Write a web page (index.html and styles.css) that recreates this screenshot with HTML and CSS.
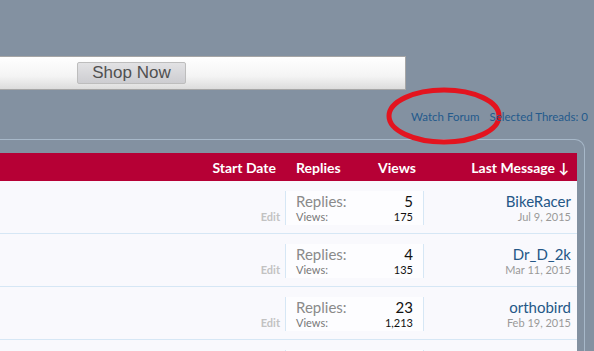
FILE: index.html
```html
<!DOCTYPE html>
<html lang="en">
<head>
    <meta charset="UTF-8" />
    <meta name="viewport" content="width=device-width, initial-scale=1.0"/>
    <title>Forum Threads</title>
    <link rel="stylesheet" href="styles.css">
</head>
<body>

    <div class="banner">
        <span class="shop-btn">Shop Now</span>
    </div>

    <div class="page-nav">
        <a href="#">Watch Forum</a>
        <a href="#">Selected Threads: 0</a>
        <svg class="circle-mark" width="120" height="60" viewBox="0 0 120 60">
            <ellipse cx="59" cy="29" rx="55" ry="26" fill="none" stroke="#e3141f" stroke-width="5"/>
        </svg>
    </div>

    <div class="threads">
        <div class="thread-head">
            <div class="col-main">Start Date</div>
            <div class="col-stats">
                <span>Replies</span>
                <span>Views</span>
            </div>
            <div class="col-last">Last Message &#8595;</div>
        </div>

        <div class="thread">
            <div class="col-main"><span class="edit">Edit</span></div>
            <div class="col-stats">
                <dl><dt>Replies:</dt><dd>5</dd></dl>
                <dl class="small"><dt>Views:</dt><dd>175</dd></dl>
            </div>
            <div class="col-last">
                <a href="#">BikeRacer</a>
                <span class="date">Jul 9, 2015</span>
            </div>
        </div>

        <div class="thread">
            <div class="col-main"><span class="edit">Edit</span></div>
            <div class="col-stats">
                <dl><dt>Replies:</dt><dd>4</dd></dl>
                <dl class="small"><dt>Views:</dt><dd>135</dd></dl>
            </div>
            <div class="col-last">
                <a href="#">Dr_D_2k</a>
                <span class="date">Mar 11, 2015</span>
            </div>
        </div>

        <div class="thread">
            <div class="col-main"><span class="edit">Edit</span></div>
            <div class="col-stats">
                <dl><dt>Replies:</dt><dd>23</dd></dl>
                <dl class="small"><dt>Views:</dt><dd>1,213</dd></dl>
            </div>
            <div class="col-last">
                <a href="#">orthobird</a>
                <span class="date">Feb 19, 2015</span>
            </div>
        </div>

        <div class="thread">
            <div class="col-main"></div>
            <div class="col-stats"></div>
            <div class="col-last"></div>
        </div>
    </div>

</body>
</html>
```

FILE: styles.css
```css
body {
    font-family: Lato, "DejaVu Sans", sans-serif;
    margin: 0;
    padding: 56px 0 0;
    background-color: #8391a1;
    color: #333;
    overflow: hidden;
}
a {
    text-decoration: none;
}
.banner {
    width: 328px;
    height: 32px;
    padding-left: 77px;
    border: 1px solid #a6a6a6;
    border-left: none;
    background: linear-gradient(#ffffff, #f4f4f4 60%, #dcdcdc);
    display: flex;
    align-items: center;
}
.shop-btn {
    font-family: "Liberation Sans", Arial, sans-serif;
    font-size: 17px;
    color: #505050;
    background: linear-gradient(#e2e2e4, #cdcdd1);
    border: 1px solid #bdbdbd;
    border-radius: 2px;
    width: 107px;
    height: 20px;
    line-height: 20px;
    text-align: center;
}
.page-nav {
    position: relative;
    display: flex;
    justify-content: flex-end;
    gap: 10px;
    padding: 20px 6px 0 0;
    height: 29px;
    font-size: 11.5px;
}
.page-nav a {
    color: #245a8c;
    position: relative;
    z-index: 1;
}
.circle-mark {
    position: absolute;
    left: 385px;
    top: -3px;
}
.threads {
    margin-right: 9px;
    border: 1px solid #a7b8c9;
    border-left: none;
    border-radius: 0 10px 0 0;
    padding: 13px 7px 0 0;
}
.thread-head, .thread {
    display: flex;
}
.thread-head {
    background: #b60035;
    color: #fff;
    font-weight: bold;
    font-size: 14px;
    height: 28px;
    align-items: center;
}
.col-main {
    width: 276px;
    padding-right: 10px;
    text-align: right;
}
.col-stats {
    width: 120px;
    padding: 0 8px 0 10px;
    display: flex;
    justify-content: space-between;
}
.col-last {
    flex: 1;
    text-align: right;
    padding-right: 8px;
}
.thread {
    height: 52px;
    border-bottom: 1px solid #d6e7f5;
    background: #f9f9fd;
}
.thread .col-main {
    display: flex;
    align-items: flex-end;
    justify-content: flex-end;
    align-self: flex-start;
    width: 280px;
    height: 34px;
    margin-top: 10px;
    padding-right: 5px;
    border-right: 1px solid #d6e7f5;
}
.edit {
    font-size: 11px;
    font-weight: bold;
    color: #c2c2c2;
    margin-bottom: 2px;
}
.thread .col-stats {
    flex-direction: column;
    justify-content: center;
    background: #fdfdff;
    border-right: 1px solid #d6e7f5;
    margin: 10px 0 8px;
    padding: 0 10px 0 10px;
    width: 117px;
}
dl {
    display: flex;
    justify-content: space-between;
    margin: 0;
    font-size: 15px;
    line-height: 18px;
}
dt {
    color: #8a8a8a;
}
dd {
    margin: 0;
    color: #111;
}
dl.small {
    font-size: 11px;
    line-height: 14px;
}
dl.small dt {
    color: #777;
}
.thread .col-last {
    display: flex;
    flex-direction: column;
    align-items: flex-end;
    justify-content: center;
    padding-right: 6px;
    padding-top: 2px;
}
.col-last a {
    color: #245787;
    font-size: 15px;
    line-height: 18px;
}
.date {
    color: #999;
    font-size: 11px;
    line-height: 14px;
}
```
